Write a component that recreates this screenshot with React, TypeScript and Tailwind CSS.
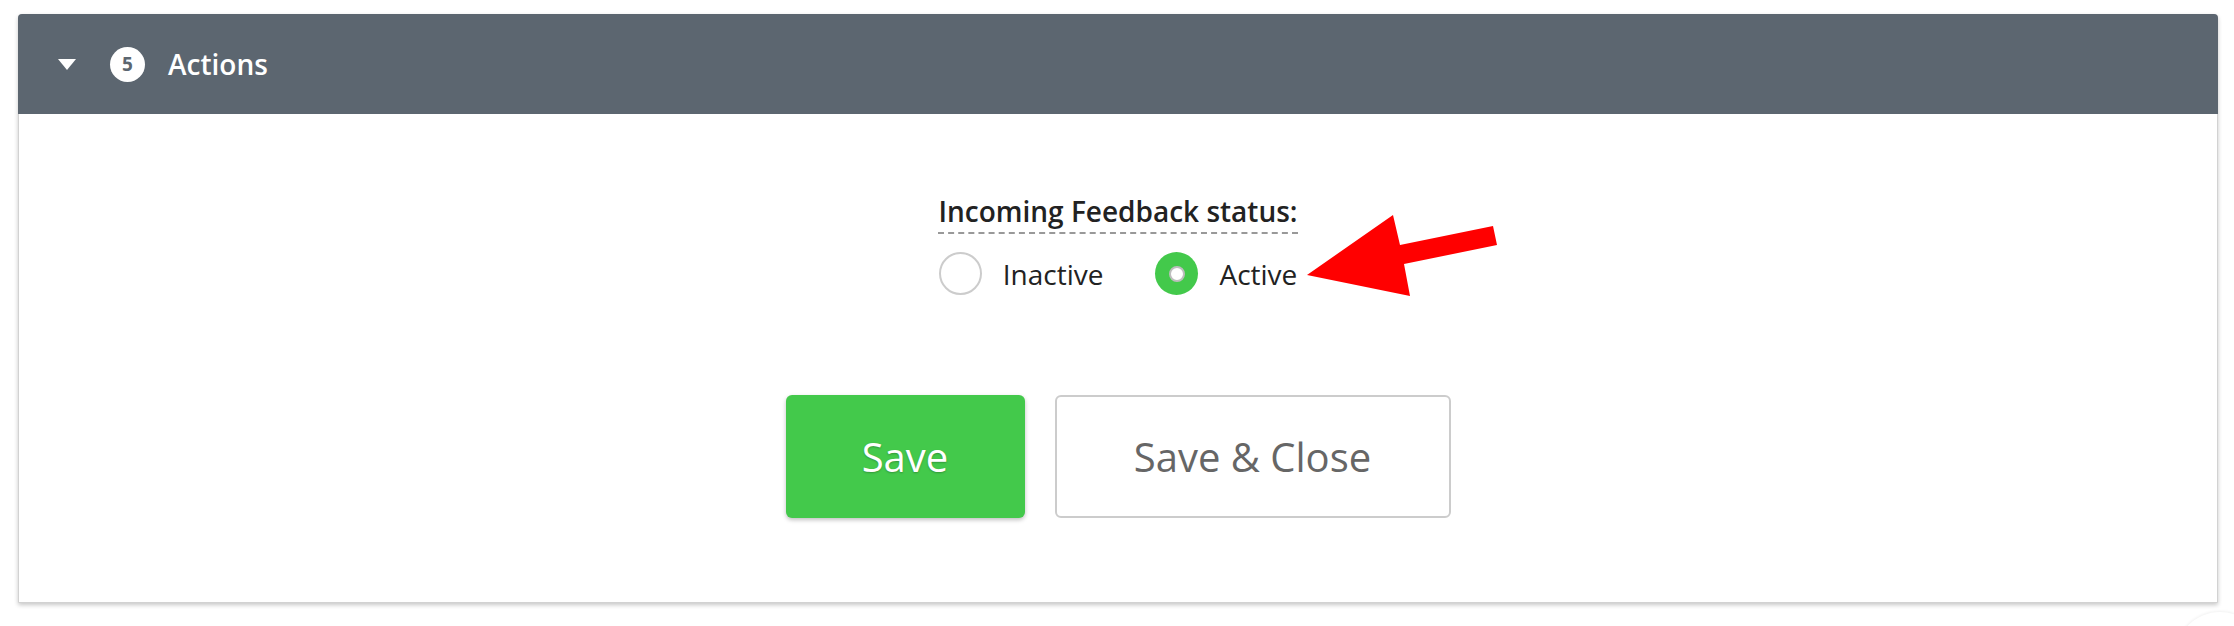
import { useState } from 'react';

const font = { fontFamily: '"Open Sans", "Liberation Sans", sans-serif' };

function Radio({ label, checked, onSelect }: { label: string; checked: boolean; onSelect: () => void }) {
  return (
    <button type="button" onClick={onSelect} className="flex items-center gap-[21px]">
      {checked ? (
        <span className="flex h-[43px] w-[43px] items-center justify-center rounded-full bg-[#43c94b]">
          <span className="h-[16px] w-[16px] rounded-full border-[2px] border-[#bdbdbd] bg-white" />
        </span>
      ) : (
        <span className="h-[43px] w-[43px] rounded-full border-[2px] border-[#cccccc] bg-white" />
      )}
      <span className="text-[28px] leading-[38px] text-[#222]">{label}</span>
    </button>
  );
}

export default function App() {
  const [status, setStatus] = useState<'inactive' | 'active'>('active');

  return (
    <div className="relative h-[626px] w-[2234px] overflow-hidden bg-white" style={font}>
      <div className="ml-[18px] mt-[14px] w-[2200px] rounded-t-[4px] border border-[#d2d2d2] bg-white shadow-[0_2px_4px_rgba(0,0,0,0.22)]">
        {/* Section header */}
        <div className="-mx-px -mt-px flex h-[100px] items-center rounded-t-[4px] bg-[#5c6670] pl-[40px]">
          <svg width="18" height="11" viewBox="0 0 18 11" className="mt-[1px]">
            <polygon points="0,0 18,0 9,11" fill="#fff" />
          </svg>
          <span className="ml-[34px] flex h-[35px] w-[35px] items-center justify-center rounded-full bg-white text-[19px] font-bold text-[#5c6670]">
            5
          </span>
          <span className="ml-[23px] text-[28px] font-semibold leading-none text-white">Actions</span>
        </div>

        {/* Body */}
        <div className="flex flex-col items-center pb-[84px] pt-[78px]">
          <div className="border-b-[2px] border-dashed border-[#999] pb-[2px] text-[28px] font-semibold leading-[38px] text-[#222]">
            Incoming Feedback status:
          </div>
          <div className="mt-[18px] flex items-center gap-[52px]">
            <Radio label="Inactive" checked={status === 'inactive'} onSelect={() => setStatus('inactive')} />
            <Radio label="Active" checked={status === 'active'} onSelect={() => setStatus('active')} />
          </div>

          <div className="mt-[100px] flex gap-[30px]">
            <button
              type="button"
              className="h-[123px] w-[239px] rounded-[6px] bg-[#43c94b] text-[40px] text-white shadow-[0_2px_4px_rgba(0,0,0,0.25)] [text-shadow:0_1px_2px_rgba(0,0,0,0.25)]"
            >
              Save
            </button>
            <button
              type="button"
              className="h-[123px] w-[396px] rounded-[6px] border-[2px] border-[#cccccc] bg-white text-[40px] text-[#666]"
            >
              Save &amp; Close
            </button>
          </div>
        </div>
      </div>

      {/* Red annotation arrow */}
      <svg className="absolute left-[1300px] top-[210px]" width="200" height="90" viewBox="0 0 200 90">
        <polygon points="7,65 93,5 100,35 193,16 197,35 104,54 110,86" fill="#ff0000" />
      </svg>

      {/* faint floating circle at bottom right */}
      <div className="absolute left-[2175px] top-[612px] h-[90px] w-[90px] rounded-full bg-white shadow-[0_-1px_3px_rgba(0,0,0,0.06)]" />
    </div>
  );
}
